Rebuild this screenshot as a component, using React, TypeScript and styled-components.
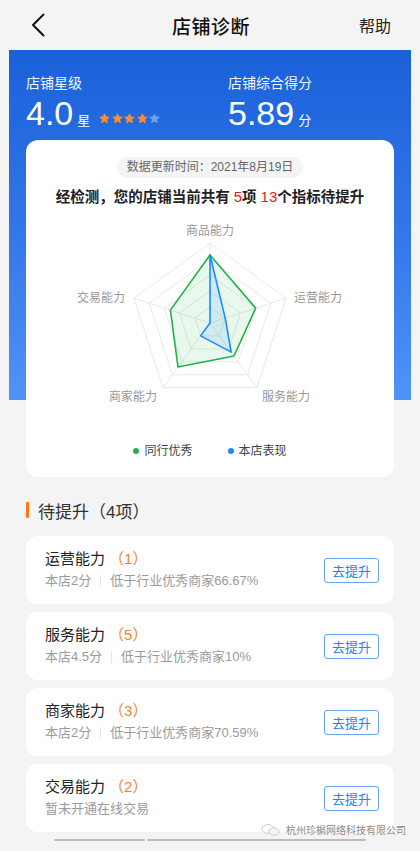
import React from 'react'
import styled, { createGlobalStyle } from 'styled-components'

const GlobalStyle = createGlobalStyle`
  html, body {
    margin: 0;
    padding: 0;
    background: #f4f4f4;
  }
  body {
    font-family: 'Liberation Sans', 'Noto Sans CJK SC', sans-serif;
    color: #222;
  }
  * {
    box-sizing: border-box;
  }
`

const Page = styled.div`
  position: relative;
  width: 420px;
  min-height: 851px;
  background: #f4f4f4;
  overflow: hidden;
`

const NavBar = styled.div`
  height: 50px;
  display: grid;
  grid-template-columns: 1fr auto 1fr;
  align-items: center;
  padding: 0 29px 0 31px;
`

const BackButton = styled.div`
  display: flex;
  align-items: center;
  height: 24px;
`

const NavTitle = styled.div`
  font-size: 19px;
  font-weight: 500;
  color: #111;
  letter-spacing: 0.5px;
`

const NavAction = styled.div`
  justify-self: end;
  font-size: 16px;
  color: #222;
`

const Hero = styled.div`
  margin: 0 9px;
  padding: 0 17px;
  background-image: linear-gradient(180deg, #1a60d9 0%, #3479e8 55%, #4e94f8 100%);
  background-size: 100% 350px;
  background-repeat: no-repeat;
`

const Stats = styled.div`
  display: grid;
  grid-template-columns: 202px 1fr;
  padding-top: 23px;
  color: #fff;
`

const StatLabel = styled.div`
  font-size: 14px;
  line-height: 20px;
  opacity: 0.95;
`

const StatValueRow = styled.div`
  display: flex;
  align-items: baseline;
  margin-top: 2px;
  height: 36px;
`

const BigNumber = styled.span`
  font-family: 'Liberation Sans', Arial, sans-serif;
  font-size: 34px;
  line-height: 36px;
  font-weight: 400;
`

const Unit = styled.span`
  font-size: 13px;
  margin-left: 4px;
`

const StarRow = styled.span`
  display: inline-flex;
  gap: 1.5px;
  margin-left: 9px;
  align-self: center;
  margin-top: 10px;
`

const Card = styled.div`
  margin-top: 9px;
  background: #fff;
  border-radius: 12px;
  padding: 17px 0 17px;
  display: flex;
  flex-direction: column;
  align-items: center;
`

const DatePill = styled.div`
  height: 21px;
  line-height: 21px;
  padding: 0 10px;
  border-radius: 11px;
  background: #f4f4f4;
  color: #666;
  font-size: 12px;
`

const Headline = styled.div`
  margin-top: 8px;
  font-size: 14.5px;
  line-height: 22px;
  font-weight: 700;
  color: #222;
  white-space: nowrap;
`

const Highlight = styled.span`
  color: #e3211b;
  font-weight: 500;
  font-size: 15px;
`

const ChartBox = styled.div`
  margin-top: 4px;
  width: 100%;
  height: 198px;
`

const Legend = styled.div`
  margin-top: 32px;
  display: flex;
  gap: 35px;
  font-size: 12px;
  line-height: 18px;
  color: #444;
`

const LegendItem = styled.div`
  display: flex;
  align-items: center;
`

const Dot = styled.span<{ $color: string }>`
  width: 6px;
  height: 6px;
  border-radius: 50%;
  background: ${p => p.$color};
  margin-right: 5px;
`

const Section = styled.div`
  padding: 0 26px;
`

const SectionTitle = styled.div`
  display: flex;
  align-items: center;
  margin-top: 21px;
  height: 24px;
  font-size: 17px;
  color: #333;
`

const TitleBar = styled.span`
  width: 3px;
  height: 16px;
  border-radius: 1px;
  background: #ff7a12;
  margin-right: 9px;
`

const ItemList = styled.div`
  margin-top: 14px;
  display: flex;
  flex-direction: column;
  gap: 8px;
`

const ItemCard = styled.div`
  height: 68px;
  background: #fff;
  border-radius: 12px;
  padding: 12px 15px 0 19px;
  display: flex;
  align-items: center;
  justify-content: space-between;
`

const ItemInfo = styled.div`
  align-self: flex-start;
`

const ItemTitle = styled.div`
  font-size: 15px;
  line-height: 22px;
  color: #222;
`

const Count = styled.span`
  color: #f0852b;
  margin-left: 4px;
`

const ItemDesc = styled.div`
  margin-top: 2px;
  display: flex;
  align-items: center;
  font-size: 13px;
  line-height: 18px;
  color: #9a9a9a;
`

const Divider = styled.span`
  width: 1px;
  height: 12px;
  background: #e6e6e6;
  margin: 0 9px;
`

const ImproveButton = styled.button`
  width: 55px;
  height: 25px;
  margin-top: -12px;
  border: 1px solid #6aa3f2;
  border-radius: 3px;
  background: #fff;
  color: #2f7df0;
  font-family: 'Liberation Sans', 'Noto Sans CJK SC', sans-serif;
  font-size: 13px;
  padding: 0;
  cursor: pointer;
`

const Footer = styled.div`
  display: flex;
  gap: 2px;
  padding: 7px 0 0 54px;
`

const ScrollBar = styled.span<{ $width: number }>`
  width: ${p => p.$width}px;
  height: 2px;
  border-radius: 1px;
  background: #bdbdbd;
`

const Watermark = styled.div`
  position: absolute;
  right: 14px;
  bottom: 14px;
  display: flex;
  align-items: center;
  gap: 5px;
  font-size: 10px;
  color: #8a8a8a;
  text-shadow: 0 0 1px #fff;
`

const StarIcon: React.FC<{ color: string }> = ({ color }) => (
  <svg width="11" height="11" viewBox="0 0 24 24">
    <polygon
      points="12,1.5 15.1,8.3 22.5,9.1 17,14.1 18.5,21.5 12,17.8 5.5,21.5 7,14.1 1.5,9.1 8.9,8.3"
      fill={color}
      stroke={color}
      strokeWidth="1.5"
      strokeLinejoin="round"
    />
  </svg>
)

const axes = ['商品能力', '运营能力', '服务能力', '商家能力', '交易能力']
const peerScores = [0.85, 0.6, 0.51, 0.68, 0.52]
const shopScores = [0.85, 0.2, 0.45, 0.2, 0]

const CX = 184
const CY = 111
const R = 80

const point = (i: number, r: number) => {
  const a = ((-90 + 72 * i) * Math.PI) / 180
  return [CX + Math.cos(a) * R * r, CY + Math.sin(a) * R * r]
}

const polygon = (values: number[]) =>
  values.map((v, i) => point(i, v).map(n => n.toFixed(1)).join(',')).join(' ')

const RadarChart: React.FC = () => {
  const rings = [1, 0.8, 0.6, 0.4, 0.2]
  return (
    <svg width="368" height="198" viewBox="0 0 368 198">
      {rings.map(r => (
        <polygon key={r} points={polygon([r, r, r, r, r])} fill="none" stroke="#e8e8e8" strokeWidth="1" />
      ))}
      {axes.map((_, i) => {
        const [x, y] = point(i, 1)
        return <line key={i} x1={CX} y1={CY} x2={x} y2={y} stroke="#e8e8e8" strokeWidth="1" />
      })}
      <polygon points={polygon(peerScores)} fill="rgba(40, 184, 80, 0.1)" stroke="#22b24c" strokeWidth="1.6" strokeLinejoin="round" />
      <polygon points={polygon(shopScores)} fill="rgba(24, 144, 255, 0.12)" stroke="#1a8cff" strokeWidth="1.6" strokeLinejoin="round" />
      <g fontSize="12" fill="#999" fontFamily="'Noto Sans CJK SC', sans-serif" dominantBaseline="central">
        <text x={CX} y={17} textAnchor="middle">{axes[0]}</text>
        <text x={268} y={84} textAnchor="start">{axes[1]}</text>
        <text x={236} y={183} textAnchor="start">{axes[2]}</text>
        <text x={131} y={183} textAnchor="end">{axes[3]}</text>
        <text x={99} y={84} textAnchor="end">{axes[4]}</text>
      </g>
    </svg>
  )
}

interface Item {
  name: string
  count: number
  score?: string
  desc: string
}

const items: Item[] = [
  { name: '运营能力', count: 1, score: '本店2分', desc: '低于行业优秀商家66.67%' },
  { name: '服务能力', count: 5, score: '本店4.5分', desc: '低于行业优秀商家10%' },
  { name: '商家能力', count: 3, score: '本店2分', desc: '低于行业优秀商家70.59%' },
  { name: '交易能力', count: 2, desc: '暂未开通在线交易' },
]

const App: React.FC = () => {
  return (
    <Page>
      <GlobalStyle />
      <NavBar>
        <BackButton>
          <svg width="14" height="24" viewBox="0 0 14 24">
            <path d="M12.5 1.5 L2 12 L12.5 22.5" fill="none" stroke="#111" strokeWidth="2" strokeLinecap="round" strokeLinejoin="round" />
          </svg>
        </BackButton>
        <NavTitle>店铺诊断</NavTitle>
        <NavAction>帮助</NavAction>
      </NavBar>

      <Hero>
        <Stats>
          <div>
            <StatLabel>店铺星级</StatLabel>
            <StatValueRow>
              <BigNumber>4.0</BigNumber>
              <Unit>星</Unit>
              <StarRow>
                {[0, 1, 2, 3, 4].map(i => (
                  <StarIcon key={i} color={i < 4 ? '#ff8d2c' : '#6ea2f0'} />
                ))}
              </StarRow>
            </StatValueRow>
          </div>
          <div>
            <StatLabel>店铺综合得分</StatLabel>
            <StatValueRow>
              <BigNumber>5.89</BigNumber>
              <Unit>分</Unit>
            </StatValueRow>
          </div>
        </Stats>

        <Card>
          <DatePill>数据更新时间：2021年8月19日</DatePill>
          <Headline>
            经检测，您的店铺当前共有 <Highlight>5</Highlight>项 <Highlight>13</Highlight>个指标待提升
          </Headline>
          <ChartBox>
            <RadarChart />
          </ChartBox>
          <Legend>
            <LegendItem>
              <Dot $color="#22b24c" />
              同行优秀
            </LegendItem>
            <LegendItem>
              <Dot $color="#1a8cff" />
              本店表现
            </LegendItem>
          </Legend>
        </Card>
      </Hero>

      <Section>
        <SectionTitle>
          <TitleBar />
          待提升（4项）
        </SectionTitle>
        <ItemList>
          {items.map(item => (
            <ItemCard key={item.name}>
              <ItemInfo>
                <ItemTitle>
                  {item.name}
                  <Count>（{item.count}）</Count>
                </ItemTitle>
                <ItemDesc>
                  {item.score && (
                    <>
                      {item.score}
                      <Divider />
                    </>
                  )}
                  {item.desc}
                </ItemDesc>
              </ItemInfo>
              <ImproveButton>去提升</ImproveButton>
            </ItemCard>
          ))}
        </ItemList>
      </Section>

      <Footer>
        <ScrollBar $width={91} />
        <ScrollBar $width={219} />
      </Footer>

      <Watermark>
        <svg width="20" height="12" viewBox="0 0 20 12">
          <ellipse cx="7" cy="5" rx="6" ry="4.5" fill="none" stroke="#cfcfcf" strokeWidth="1" />
          <ellipse cx="13" cy="7.5" rx="5" ry="3.8" fill="#f4f4f4" stroke="#cfcfcf" strokeWidth="1" />
        </svg>
        杭州珍榍网络科技有限公司
      </Watermark>
    </Page>
  )
}

export default App
